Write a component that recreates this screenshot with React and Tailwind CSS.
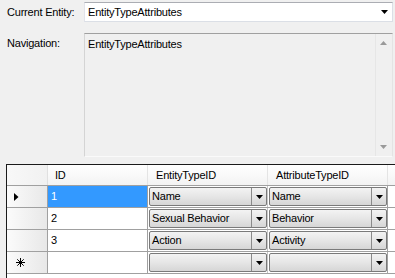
const Arrow = ({ color = "#000" }) => (
  <svg width="7" height="4" viewBox="0 0 7 4"><path d="M0 0h7L3.5 4z" fill={color} /></svg>
);
const UpArrow = ({ color = "#9a9a9a" }) => (
  <svg width="7" height="4" viewBox="0 0 7 4"><path d="M0 4h7L3.5 0z" fill={color} /></svg>
);

const Combo = ({ text }) => (
  <div className="flex-1 flex h-full border border-[#7a7a7a] rounded-[2px] bg-gradient-to-b from-[#f3f3f3] via-[#e6e6e6] to-[#d6d6d6] overflow-hidden">
    <div className="flex-1 flex items-center pl-[2px] whitespace-nowrap">{text}</div>
    <div className="w-[15px] flex items-center justify-center border-l border-[#8a8a8a]">
      <Arrow />
    </div>
  </div>
);

const RowHead = ({ children }) => (
  <div className="w-[41px] h-full border-r border-r-[#a0a0a0] bg-gradient-to-r from-[#fbfbfb] to-[#e8e8e8] flex items-center pl-[7px]">
    {children}
  </div>
);

function Row({ id, head, a, b, selected }) {
  return (
    <div className="flex h-[22px] border-b border-[#a0a0a0]">
      <RowHead>{head}</RowHead>
      <div className={`w-[100px] h-full border-r border-[#a0a0a0] flex items-center pl-[3px] ${selected ? "bg-[#3399ff] text-white" : "bg-white"}`}>
        {id}
      </div>
      <div className="w-[120px] h-full border-r border-[#c8c8c8] flex pl-[1px] py-[1px]">
        <Combo text={a} />
      </div>
      <div className="w-[120px] h-full border-r border-[#a0a0a0] flex pl-[1px] py-[1px]">
        <Combo text={b} />
      </div>
    </div>
  );
}

export default function App() {
  return (
    <div className="w-[395px] h-[278px] bg-[#f0f0f0] overflow-hidden font-['Liberation_Sans',Arial,sans-serif] text-[11px] tracking-[-0.2px] text-black flex flex-col">
      <div className="flex items-center mt-[2px] h-[20px]">
        <div className="w-[84px] pl-[7px]">Current Entity:</div>
        <div className="w-[309px] h-[20px] bg-white border border-[#dbdfe6] border-t-[#abadb3] border-l-[#e2e3ea] flex items-center justify-between pl-[3px] pr-[4px]">
          <span>EntityTypeAttributes</span>
          <Arrow />
        </div>
      </div>

      <div className="flex items-start mt-[11px]">
        <div className="w-[84px] pl-[7px] pt-[2px]">Navigation:</div>
        <div className="w-[309px] h-[124px] border border-t-[#a0a0a0] border-l-[#d4d4d4] border-r-[#e4e4e4] border-b-[#fafafa] bg-[#f0f0f0] flex">
          <div className="flex-1 pl-[3px] pt-[2px]">EntityTypeAttributes</div>
          <div className="w-[17px] h-full border-l border-[#e6e6e6] bg-[#f0f0f0] flex flex-col items-center justify-between py-[7px] pr-[1px]">
            <UpArrow />
            <Arrow color="#9a9a9a" />
          </div>
        </div>
      </div>

      <div className="mt-[7px] ml-[6px] flex-1 bg-white border-l border-t border-[#1a1a1a] flex flex-col">
        <div className="flex h-[21px] border-b border-[#a0a0a0] bg-gradient-to-b from-white to-[#f3f3f3]">
          <div className="w-[41px] h-full border-r border-[#e0e0e0] bg-gradient-to-r from-[#f8f8f8] to-[#f1f1f1]" />
          <div className="w-[100px] h-full border-r border-[#e4e4e4] flex items-center pl-[7px]">ID</div>
          <div className="w-[120px] h-full border-r border-[#e4e4e4] flex items-center pl-[8px]">EntityTypeID</div>
          <div className="w-[120px] h-full border-r border-[#e4e4e4] flex items-center pl-[8px]">AttributeTypeID</div>
        </div>
        <Row
          id="1"
          selected
          head={<svg width="5" height="8" viewBox="0 0 5 8"><path d="M0 0L4.5 4L0 8z" fill="#000" /></svg>}
          a="Name"
          b="Name"
        />
        <Row id="2" a="Sexual Behavior" b="Behavior" />
        <Row id="3" a="Action" b="Activity" />
        <Row
          id=""
          head={
            <svg width="9" height="9" viewBox="0 0 9 9" className="ml-[2px]">
              <path d="M4.5 0v9M0 4.5h9M1.3 1.3l6.4 6.4M7.7 1.3l-6.4 6.4" stroke="#000" strokeWidth="1" />
            </svg>
          }
          a=""
          b=""
        />
      </div>
    </div>
  );
}
